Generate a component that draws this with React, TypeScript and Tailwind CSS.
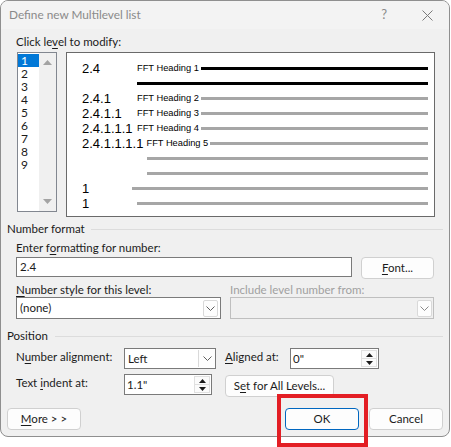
import type { ReactNode } from 'react'

const ui = "font-['Lato','Noto_Sans',sans-serif]"

type PreviewRow = {
  num?: string
  label?: string
  dark?: boolean
  numClassName: string
}

const previewRows: PreviewRow[] = [
  { num: '2.4', label: 'FFT Heading 1', dark: true, numClassName: 'min-w-[55px]' },
  { dark: true, numClassName: 'w-[55px]' },
  { num: '2.4.1', label: 'FFT Heading 2', numClassName: 'min-w-[55px]' },
  { num: '2.4.1.1', label: 'FFT Heading 3', numClassName: 'min-w-[55px]' },
  { num: '2.4.1.1.1', label: 'FFT Heading 4', numClassName: 'min-w-[55px]' },
  { num: '2.4.1.1.1.1', label: 'FFT Heading 5', numClassName: 'min-w-[55px]' },
  { numClassName: 'w-[65px]' },
  { numClassName: 'w-[65px]' },
  { num: '1', numClassName: 'w-[50px]' },
  { num: '1', numClassName: 'w-[55px]' },
]

function Chevron({ color = '#5f5f5f' }: { color?: string }) {
  return (
    <svg width="9" height="5" viewBox="0 0 9 5">
      <path d="M0.5 0.5 L4.5 4.5 L8.5 0.5" fill="none" stroke={color} strokeWidth="1" />
    </svg>
  )
}

function Triangle({ up, color, w = 9, h = 5 }: { up?: boolean; color: string; w?: number; h?: number }) {
  return (
    <svg width={w} height={h} viewBox={`0 0 ${w} ${h}`}>
      <path d={up ? `M${w / 2} 0 L${w} ${h} L0 ${h} Z` : `M0 0 L${w} 0 L${w / 2} ${h} Z`} fill={color} />
    </svg>
  )
}

function Spin() {
  return (
    <div className="my-[1px] mr-[1px] flex w-[16px] flex-col">
      <div className="flex flex-1 items-center justify-center border border-[#e0e0e0] bg-[#fbfbfb]">
        <Triangle up color="#1b1b1b" w={7} h={4} />
      </div>
      <div className="flex flex-1 items-center justify-center border border-t-0 border-[#e0e0e0] bg-[#fbfbfb]">
        <Triangle color="#1b1b1b" w={7} h={4} />
      </div>
    </div>
  )
}

function Button({ children, className = '' }: { children: ReactNode; className?: string }) {
  return (
    <div
      className={[
        'flex h-[22px] items-center justify-center whitespace-nowrap rounded-[4px] border bg-[#fdfdfd] text-[11.5px] text-[#1b1b1b]',
        className || 'border-[#d0d0d0]',
      ].join(' ')}
    >
      {children}
    </div>
  )
}

function SectionTitle({ title, gap }: { title: string; gap: string }) {
  return (
    <div className="flex h-[16px] items-center pl-[6px] pr-[6px]">
      <span className="text-[11.5px] leading-[16px] text-[#1b1b1b]">{title}</span>
      <div className={['h-px flex-1 bg-[#dcdcdc]', gap].join(' ')} />
    </div>
  )
}

export default function App() {
  return (
    <div className={`relative h-[447px] w-[451px] overflow-hidden bg-white ${ui}`}>
      <div className="flex h-[437px] w-[450px] flex-col overflow-hidden rounded-[8px] border border-[#8f8f8f] bg-[#f0f0f0]">
        {/* title bar */}
        <div className="flex h-[28px] items-center bg-[#f3f3f3] pl-[8px]">
          <span className="text-[11.8px] text-[#8a8a8a]">Define new Multilevel list</span>
          <span className="ml-auto text-[13px] text-[#8a8a8a]">?</span>
          <svg className="ml-[35px] mr-[16px]" width="11" height="11" viewBox="0 0 11 11">
            <path d="M0.5 0.5 L10.5 10.5 M10.5 0.5 L0.5 10.5" stroke="#7a7a7a" strokeWidth="1" />
          </svg>
        </div>

        <div className="h-[23px] whitespace-nowrap pl-[15px] pt-[5px] text-[11.5px] leading-[16px] text-[#1b1b1b]">
          Click le<u className="underline-offset-2">v</u>el to modify:
        </div>

        {/* level list + preview */}
        <div className="flex h-[165px] pl-[16px]">
          <div className="flex h-[160px] w-[40px] border border-[#828790] bg-white">
            <div className="flex w-[21px] flex-col pt-[1px]">
              {[1, 2, 3, 4, 5, 6, 7, 8, 9].map((n) => (
                <div
                  key={n}
                  className={[
                    'h-[13px] pl-[3px] text-[12px] leading-[13px]',
                    n === 1 ? 'bg-[#0078d7] text-white' : 'text-[#1b1b1b]',
                  ].join(' ')}
                >
                  {n}
                </div>
              ))}
            </div>
            <div className="flex flex-1 flex-col items-center justify-between bg-[#f0f0f0] py-[7px]">
              <Triangle up color="#a3a3a3" />
              <Triangle color="#a3a3a3" />
            </div>
          </div>

          <div className="ml-[9px] flex h-[165px] w-[369px] flex-col border border-[#6a6a6a] bg-white pl-[15px] pr-[6px] pt-[8px] font-['Liberation_Sans',Arial,sans-serif] text-black">
            {previewRows.map((r, i) => (
              <div key={i} className="flex h-[15px] items-center">
                <span className={`${r.numClassName} shrink-0 pr-[3px] text-[13px] leading-[15px]`}>{r.num}</span>
                {r.label ? (
                  <span className="mr-[2px] shrink-0 text-[9.3px] leading-[15px]">{r.label}</span>
                ) : null}
                <div className={['h-[3px] flex-1', r.dark ? 'bg-black' : 'bg-[#a6a6a6]'].join(' ')} />
              </div>
            ))}
          </div>
        </div>

        {/* number format */}
        <div className="mt-[4px]">
          <SectionTitle title="Number format" gap="ml-[6px]" />
        </div>
        <div className="flex flex-col whitespace-nowrap pl-[15px] text-[11.5px] text-[#1b1b1b]">
          <div className="mt-[3px] leading-[16px]">
            Enter f<u className="underline-offset-2">o</u>rmatting for number:
          </div>
          <div className="mt-[1px] flex h-[21px] items-start">
            <div className="flex h-[20px] w-[336px] items-center border border-[#7a7a7a] bg-white pl-[3px] leading-[16px]">
              2.4
            </div>
            <Button className="ml-[9px] w-[73px] border-[#d0d0d0]">
              <span>
                <u className="underline-offset-2">F</u>ont...
              </span>
            </Button>
          </div>
          <div className="mt-[4px] flex h-[15px] leading-[15px]">
            <span className="w-[214px]">
              <u className="underline-offset-2">N</u>umber style for this level:
            </span>
            <span className="text-[#a0a0a0]">Include level number from:</span>
          </div>
          <div className="flex h-[22px]">
            <div className="flex w-[205px] items-center border border-[#7a7a7a] bg-white pl-[3px]">
              <span className="flex-1 leading-[16px]">(none)</span>
              <div className="mr-[2px] flex h-[17px] w-[15px] items-center justify-center rounded-[2px] border border-[#d9d9d9] bg-[#fdfdfd]">
                <Chevron />
              </div>
            </div>
            <div className="ml-[9px] flex w-[204px] items-center justify-end border border-[#bfbfbf] bg-[#f0f0f0]">
              <div className="mr-[1px] flex h-[17px] w-[15px] items-center justify-center rounded-[2px] border border-[#d9d9d9] bg-[#fdfdfd]">
                <Chevron color="#8a8a8a" />
              </div>
            </div>
          </div>
        </div>

        {/* position */}
        <div className="mt-[9px]">
          <SectionTitle title="Position" gap="ml-[7px]" />
        </div>
        <div className="flex flex-col whitespace-nowrap pl-[15px] text-[11.5px] text-[#1b1b1b]">
          <div className="mt-[4px] flex h-[21px] items-start">
            <span className="w-[108px] pt-[1px] leading-[16px]">
              N<u className="underline-offset-2">u</u>mber alignment:
            </span>
            <div className="flex h-[21px] w-[92px] items-stretch border border-[#7a7a7a] bg-white">
              <span className="flex flex-1 items-center pl-[3px] pt-[1px]">Left</span>
              <div className="my-[1px] flex w-[17px] items-center justify-center border-l border-[#d9d9d9] bg-[#fdfdfd]">
                <Chevron />
              </div>
            </div>
            <span className="ml-[9px] w-[65px] pt-[1px] leading-[16px]">
              <u className="underline-offset-2">A</u>ligned at:
            </span>
            <div className="flex h-[21px] w-[89px] border border-[#7a7a7a] bg-white">
              <span className="flex flex-1 items-center pl-[2px] pt-[1px]">0"</span>
              <Spin />
            </div>
          </div>
          <div className="mt-[5px] flex h-[23px] items-start">
            <span className="w-[108px] pt-[1px] leading-[16px]">
              Text <u className="underline-offset-2">i</u>ndent at:
            </span>
            <div className="flex h-[21px] w-[88px] border border-[#7a7a7a] bg-white">
              <span className="flex flex-1 items-center pl-[2px] pt-[1px]">1.1"</span>
              <Spin />
            </div>
            <Button className="ml-[13px] mt-[1px] w-[109px] border-[#d0d0d0]">
              <span>
                S<u className="underline-offset-2">e</u>t for All Levels...
              </span>
            </Button>
          </div>
        </div>

        {/* bottom buttons */}
        <div className="mt-[11px] flex px-[6px]">
          <Button className="w-[74px] border-[#d0d0d0]">
            <span>
              <u className="underline-offset-2">M</u>ore &gt; &gt;
            </span>
          </Button>
          <Button className="ml-auto w-[74px] border-[#0067c0]">OK</Button>
          <Button className="ml-[10px] w-[74px] border-[#d0d0d0]">Cancel</Button>
        </div>
      </div>

      {/* annotation */}
      <div className="absolute left-[277px] top-[394px] h-[53px] w-[91px] border-[4px] border-[#e31e24]" />
    </div>
  )
}
